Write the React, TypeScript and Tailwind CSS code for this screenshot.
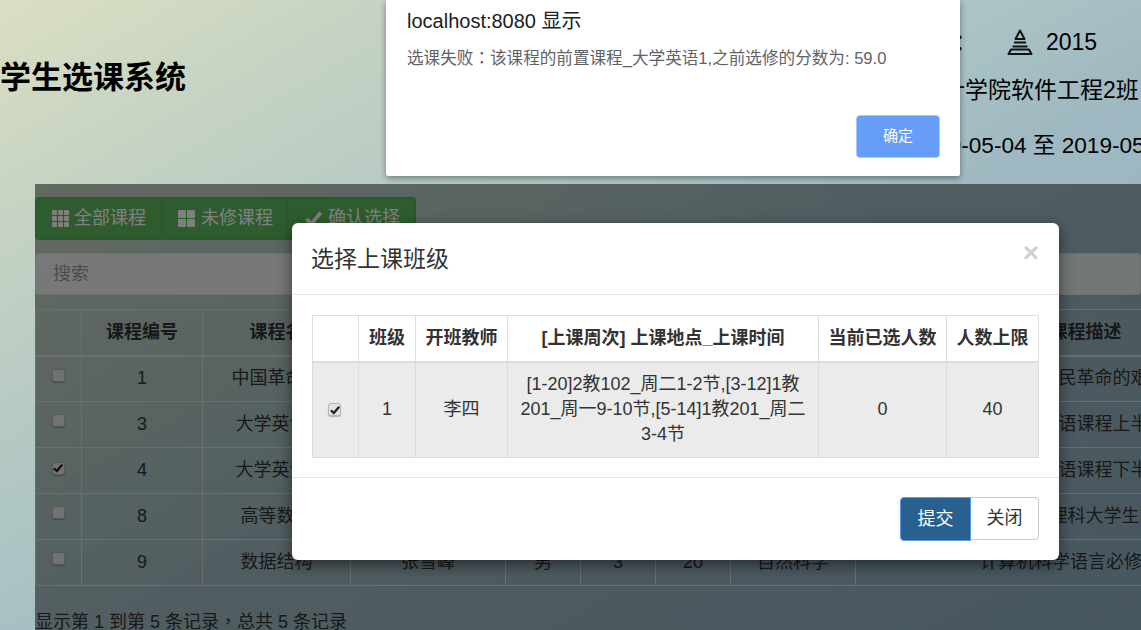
const COURSES = [
  { id: 1, name: "中国革命史", teacher: "王五", sex: "男", credit: 2, cap: 30, type: "人文社科", desc: "中国人民革命的艰苦" },
  { id: 3, name: "大学英语1", teacher: "李四", sex: "男", credit: 3, cap: 40, type: "语言文学", desc: "大学英语课程上半部" },
  { id: 4, name: "大学英语2", teacher: "李四", sex: "男", credit: 3, cap: 40, type: "语言文学", desc: "大学英语课程下半部" },
  { id: 8, name: "高等数学", teacher: "赵六", sex: "女", credit: 4, cap: 60, type: "自然科学", desc: "面向理科大学生的" },
  { id: 9, name: "数据结构", teacher: "张雪峰", sex: "男", credit: 3, cap: 20, type: "自然科学", desc: "计算机科学语言必修课程C" },
];

function Check({ className }: { className: string }) {
  return (
    <svg viewBox="0 0 18 18" className={className} fill="none" stroke="currentColor" strokeWidth="4">
      <path d="M1.5 9.5 L6.8 14.5 L16.5 3" />
    </svg>
  );
}

function Box({ checked }: { checked?: boolean }) {
  return (
    <span className="inline-flex w-[13px] h-[13px] items-center justify-center rounded-[3px] border border-[#b5b5b5] bg-[#e4e4e4] text-[#222] shadow-[0_1px_1px_rgba(0,0,0,0.25)]">
      {checked && <Check className="w-[10px] h-[10px]" />}
    </span>
  );
}

function GridIcon({ n }: { n: number }) {
  const gap = 1;
  const size = (17 - gap * (n - 1)) / n;
  const cells = [];
  for (let r = 0; r < n; r++) {
    for (let c = 0; c < n; c++) {
      cells.push(<rect key={`${r}-${c}`} x={c * (size + gap)} y={r * (size + gap)} width={size} height={size} rx="1" />);
    }
  }
  return (
    <svg viewBox="0 0 17 17" className="w-[17px] h-[17px] fill-current shrink-0">
      {cells}
    </svg>
  );
}

function Pyramid() {
  return (
    <svg viewBox="0 0 26 26" className="w-[26px] h-[26px] shrink-0" fill="none" stroke="#111" strokeWidth="2" strokeLinejoin="round">
      <path d="M13 1.5 L17.5 10 H8.5 Z" />
      <path d="M7 13.5 H19" />
      <path d="M5.5 17.5 H20.5" />
      <path d="M4 20.5 H22 L24.5 25 H1.5 Z" />
    </svg>
  );
}

export default function App() {
  return (
    <div className="relative w-[1141px] h-[630px] overflow-hidden font-['Liberation_Sans','Noto_Sans_CJK_SC',sans-serif] text-[18px] text-[#333] bg-[linear-gradient(150deg,#dadfc2_0%,#c6d3c3_17%,#a9c2c4_47%,#a0b9c1_57%,#8fafc0_100%)]">
      {/* page header */}
      <header className="h-[184px] flex justify-between text-black">
        <h1 className="pt-[58px] text-[31px] leading-[40px] font-bold whitespace-nowrap">学生选课系统</h1>
        <div className="w-[231px] shrink-0 text-[23px] leading-[30px] whitespace-nowrap pt-[27px]">
          <div className="flex items-center h-[30px]">
            <span className="w-[97px] -ml-[2px] mr-[2px]">年级：</span>
            <Pyramid />
            <span className="ml-[13px]">2015</span>
          </div>
          <div className="mt-[18px] pl-[9px]">设计学院软件工程2班</div>
          <div className="mt-[26px] pl-[1px] text-[22.6px]">2019-05-04 至 2019-05-20</div>
        </div>
      </header>

      {/* course list */}
      <main className="relative h-[446px] ml-[35px] pt-[13px] overflow-hidden">
        <div className="flex w-[381px] h-[43px] text-white">
          <div className="w-[127px] flex items-center gap-[5px] pl-[16px] bg-[#5cb85c] border border-[#4cae4c] rounded-l-[4px]">
            <GridIcon n={3} />
            全部课程
          </div>
          <div className="w-[126px] flex items-center gap-[6px] pl-[16px] bg-[#5cb85c] border-y border-r border-[#4cae4c]">
            <GridIcon n={2} />
            未修课程
          </div>
          <div className="w-[128px] flex items-center gap-[6px] pl-[17px] bg-[#5cb85c] border-y border-r border-[#4cae4c] rounded-r-[4px]">
            <Check className="w-[17px] h-[17px]" />
            确认选择
          </div>
        </div>

        <input
          readOnly
          placeholder="搜索"
          className="block mt-[13px] w-full h-[42px] px-[17px] rounded-[4px] bg-white/75 border border-[#ccc]/40 placeholder:text-[#999] outline-none"
        />

        <table className="mt-[14px] w-[1280px] table-fixed border-collapse text-center">
          <colgroup>
            <col className="w-[46px]" />
            <col className="w-[121px]" />
            <col className="w-[148px]" />
            <col className="w-[155px]" />
            <col className="w-[75px]" />
            <col className="w-[75px]" />
            <col className="w-[75px]" />
            <col className="w-[125px]" />
            <col className="w-[460px]" />
          </colgroup>
          <thead>
            <tr className="h-[46px] font-bold">
              <th className="border border-[#ddd] border-b-2" />
              <th className="border border-[#ddd] border-b-2">课程编号</th>
              <th className="border border-[#ddd] border-b-2">课程名</th>
              <th className="border border-[#ddd] border-b-2">授课教师</th>
              <th className="border border-[#ddd] border-b-2">性别</th>
              <th className="border border-[#ddd] border-b-2">学分</th>
              <th className="border border-[#ddd] border-b-2">人数</th>
              <th className="border border-[#ddd] border-b-2">课程类型</th>
              <th className="border border-[#ddd] border-b-2">课程描述</th>
            </tr>
          </thead>
          <tbody>
            {COURSES.map((c) => (
              <tr key={c.id} className="h-[46px]">
                <td className="border border-[#ddd] align-top pt-[6px] pr-[1px]">
                  <Box checked={c.id === 4} />
                </td>
                <td className="border border-[#ddd]">{c.id}</td>
                <td className="border border-[#ddd]">{c.name}</td>
                <td className="border border-[#ddd]">{c.teacher}</td>
                <td className="border border-[#ddd]">{c.sex}</td>
                <td className="border border-[#ddd]">{c.credit}</td>
                <td className="border border-[#ddd]">{c.cap}</td>
                <td className="border border-[#ddd]">{c.type}</td>
                <td className="border border-[#ddd] whitespace-nowrap">{c.desc}</td>
              </tr>
            ))}
          </tbody>
        </table>

        <p className="mt-[21px] leading-[26px] whitespace-nowrap">
          显示第 1 到第 5 条记录<span className="font-['Noto_Sans_CJK_TC']">，</span>总共 5 条记录
        </p>

        {/* backdrop only covers this panel */}
        <div className="absolute inset-0 bg-black/50" />
      </main>

      {/* select class modal */}
      <section className="absolute left-[292px] top-[223px] w-[767px] h-[337px] bg-white rounded-[6px] shadow-[0_5px_15px_rgba(0,0,0,0.5)]">
        <div className="h-[72px] flex items-center justify-between pl-[19px] pr-[20px] border-b border-[#e5e5e5]">
          <h2 className="text-[23px] leading-[30px]">选择上课班级</h2>
          <span className="text-[28px] leading-none font-bold text-black/20 -mt-[12px]">×</span>
        </div>
        <div className="px-[20px] pt-[20px] pb-[19px]">
          <table className="w-[726px] table-fixed border-collapse text-center">
            <colgroup>
              <col className="w-[46px]" />
              <col className="w-[57px]" />
              <col className="w-[92px]" />
              <col className="w-[311px]" />
              <col className="w-[128px]" />
              <col className="w-[92px]" />
            </colgroup>
            <thead>
              <tr className="h-[46px] font-bold">
                <th className="border border-[#ddd] border-b-2" />
                <th className="border border-[#ddd] border-b-2">班级</th>
                <th className="border border-[#ddd] border-b-2">开班教师</th>
                <th className="border border-[#ddd] border-b-2">[上课周次] 上课地点_上课时间</th>
                <th className="border border-[#ddd] border-b-2">当前已选人数</th>
                <th className="border border-[#ddd] border-b-2">人数上限</th>
              </tr>
            </thead>
            <tbody>
              <tr className="h-[96px] bg-[#ebebeb]">
                <td className="border border-[#ddd] align-top pt-[33px] pr-[2px]">
                  <Box checked />
                </td>
                <td className="border border-[#ddd]">1</td>
                <td className="border border-[#ddd]">李四</td>
                <td className="border border-[#ddd] px-[8px] leading-[25px]">[1-20]2教102_周二1-2节,[3-12]1教201_周一9-10节,[5-14]1教201_周二3-4节</td>
                <td className="border border-[#ddd]">0</td>
                <td className="border border-[#ddd]">40</td>
              </tr>
            </tbody>
          </table>
        </div>
        <div className="flex justify-end px-[20px] pt-[19px] border-t border-[#e5e5e5]">
          <button className="w-[71px] h-[44px] bg-[#286090] text-white border border-[#5b9be6] rounded-l-[4px]">提交</button>
          <button className="w-[68px] h-[43px] bg-white text-[#333] border border-[#ccc] border-l-0 rounded-r-[4px]">关闭</button>
        </div>
      </section>

      {/* browser alert */}
      <section className="absolute left-[386px] top-0 w-[574px] h-[176px] px-[21px] bg-white rounded-b-[2px] shadow-[0_2px_6px_rgba(0,0,0,0.4)]">
        <div className="pt-[8px] text-[20px] leading-[26px] text-[#202124]">localhost:8080 显示</div>
        <div className="mt-[11px] text-[16.6px] leading-[24px] text-[#5f6368] whitespace-nowrap">
          选课失败<span className="font-['Noto_Sans_CJK_TC']">：</span>该课程的前置课程_大学英语1,之前选修的分数为: 59.0
        </div>
        <div className="flex justify-end mt-[44px]">
          <button className="w-[84px] h-[43px] -mr-[1px] bg-[#669df6] text-white text-[15px] rounded-[4px] border border-[#a8c7fa]">确定</button>
        </div>
      </section>
    </div>
  );
}
